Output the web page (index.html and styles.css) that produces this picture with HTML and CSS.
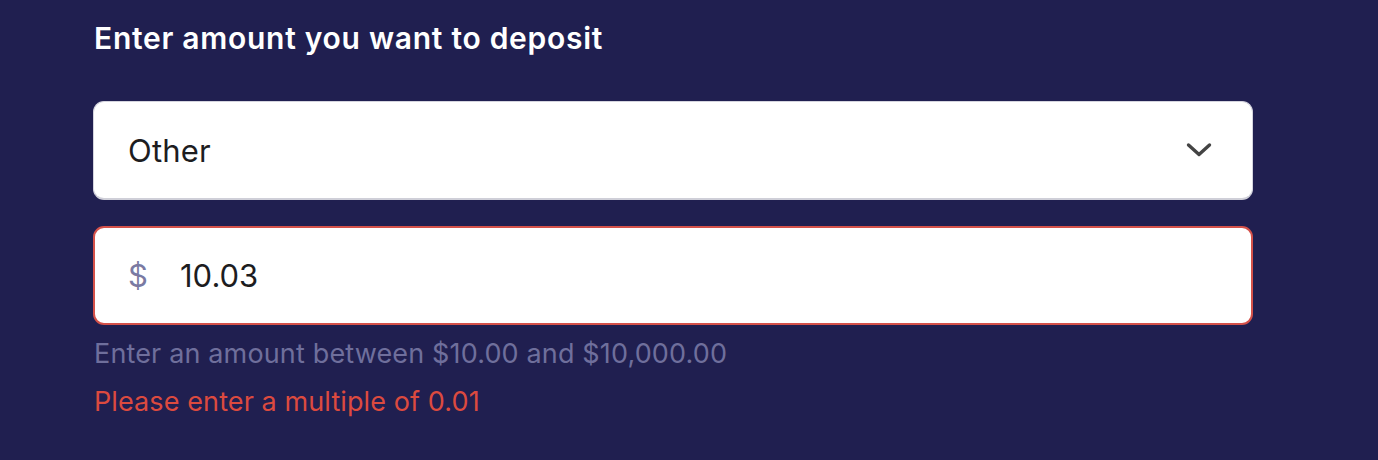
FILE: index.html
```html
<!DOCTYPE html>
<html lang="en">
<head>
<meta charset="utf-8">
<link rel="stylesheet" href="styles.css">
</head>
<body>
<div class="page">
  <h2 class="title">Enter amount you want to deposit</h2>
  <div class="select">
    <span class="select-value">Other</span>
    <svg class="chevron" width="26" height="16" viewBox="0 0 26 16"><path d="M2.5 3 L13 12.5 L23.5 3" fill="none" stroke="#444" stroke-width="3.4" stroke-linecap="round" stroke-linejoin="round"/></svg>
  </div>
  <div class="input error">
    <span class="currency">$</span>
    <span class="value">10.03</span>
  </div>
  <p class="hint">Enter an amount between $10.00 and $10,000.00</p>
  <p class="err">Please enter a multiple of 0.01</p>
</div>
</body>
</html>
```
FILE: styles.css
```css
html, body { margin: 0; padding: 0; }
body {
  background: #201f50;
  font-family: Inter, "Noto Sans", sans-serif;
  width: 1378px;
  height: 460px;
  overflow: hidden;
}
.page {
  padding: 18px 0 0 93px;
  width: 1160px;
}
.title {
  margin: 0 0 0 1px;
  color: #ffffff;
  font-size: 30px;
  font-weight: 600;
  letter-spacing: 0.72px;
  line-height: 40px;
}
.select {
  margin-top: 43px;
  height: 99px;
  box-sizing: border-box;
  background: #fff;
  border: 1px solid #d4d4de;
  border-bottom: 2px solid #cfcfd8;
  border-radius: 11px;
  display: flex;
  align-items: center;
  justify-content: space-between;
  padding: 0 40px 0 34px;
}
.select-value {
  font-size: 31px;
  letter-spacing: 0.2px;
  color: #1d1d1f;
}
.chevron { display: block; }
.input {
  margin-top: 26px;
  height: 99px;
  box-sizing: border-box;
  background: #fff;
  border: 2px solid #d4514a;
  border-radius: 11px;
  display: flex;
  align-items: center;
  padding: 0 0 0 33px;
}
.currency {
  color: #7a7aa2;
  font-size: 31px;
  width: 52px;
}
.value {
  font-size: 31px;
  color: #1d1d1f;
}
.hint {
  margin: 12px 0 0 1px;
  color: #6f6f9c;
  font-size: 27px;
  letter-spacing: 0.15px;
  line-height: 34px;
}
.err {
  margin: 14px 0 0 1px;
  color: #dc4a3f;
  font-size: 27px;
  letter-spacing: 0.1px;
  line-height: 34px;
}
```
